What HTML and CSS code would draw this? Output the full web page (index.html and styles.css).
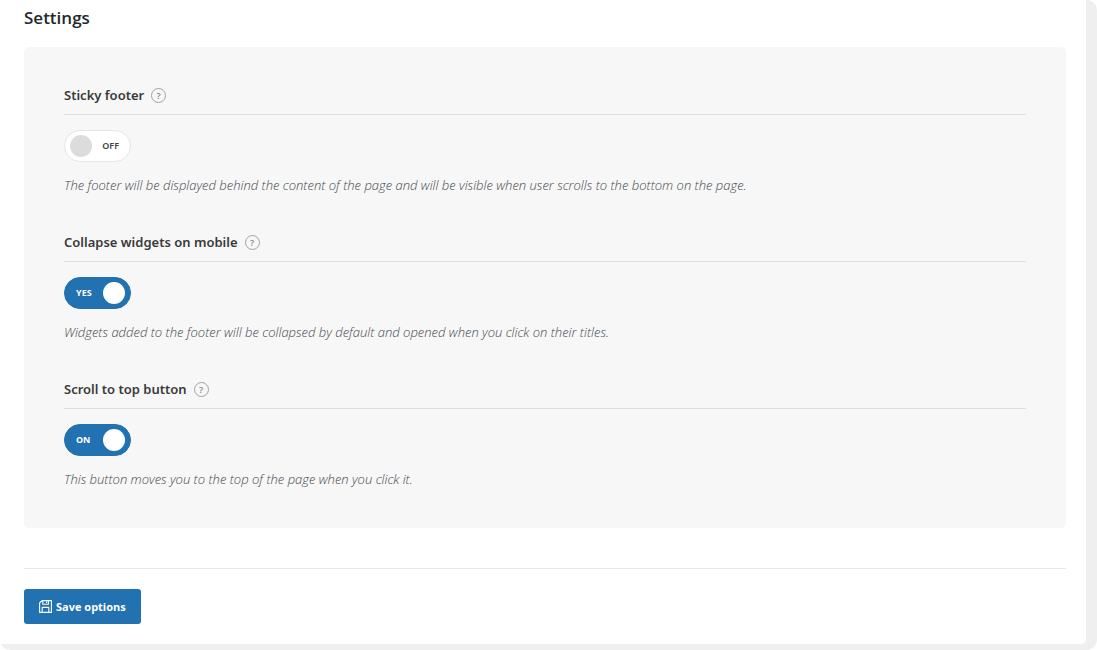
FILE: index.html
```html
<!DOCTYPE html>
<html lang="en">
<head>
<meta charset="utf-8">
<title>Settings</title>
<link rel="stylesheet" href="styles.css">
</head>
<body>
<div class="frame">
  <main class="page">
    <h1 class="page-title">Settings</h1>
    <form class="form">
      <div class="panel">
        <section class="option">
          <div class="option-head">
            <h2 class="option-title" id="sticky-title">Sticky footer</h2>
            <button class="help" type="button" aria-label="Help: sticky footer">?</button>
          </div>
          <label class="switch">
            <input class="switch-input" type="checkbox" aria-labelledby="sticky-title">
            <span class="switch-text">OFF</span>
          </label>
          <p class="description">The footer will be displayed behind the content of the page and will be visible when user scrolls to the bottom on the page.</p>
        </section>
        <section class="option">
          <div class="option-head">
            <h2 class="option-title" id="collapse-title">Collapse widgets on mobile</h2>
            <button class="help" type="button" aria-label="Help: collapse widgets on mobile">?</button>
          </div>
          <label class="switch switch-on">
            <input class="switch-input" type="checkbox" aria-labelledby="collapse-title" checked>
            <span class="switch-text">YES</span>
          </label>
          <p class="description">Widgets added to the footer will be collapsed by default and opened when you click on their titles.</p>
        </section>
        <section class="option">
          <div class="option-head">
            <h2 class="option-title" id="scroll-title">Scroll to top button</h2>
            <button class="help" type="button" aria-label="Help: scroll to top button">?</button>
          </div>
          <label class="switch switch-on">
            <input class="switch-input" type="checkbox" aria-labelledby="scroll-title" checked>
            <span class="switch-text">ON</span>
          </label>
          <p class="description">This button moves you to the top of the page when you click it.</p>
        </section>
      </div>
      <div class="actions">
        <button class="save" type="submit">
          <svg class="save-icon" viewBox="0 0 13 13" aria-hidden="true"><path d="M3 .6h9.4v11.8H.6V3zM3.8.6v3.6h5.6V.6M7.6 1.6v1.4M3.2 12.4V7.4h6.6v5"/></svg>
          Save options
        </button>
      </div>
    </form>
  </main>
</div>
</body>
</html>
```
FILE: styles.css
```css
* { box-sizing: border-box; }

body {
  margin: 0;
  background: #fff;
  color: #3c434a;
  font-family: "Segoe UI", "Noto Sans", "Open Sans", sans-serif;
  font-size: 13px;
}

h1, h2, p { margin: 0; }

.frame {
  min-height: 100vh;
  padding: 0 11px 6px 0;
  border-radius: 0 10px 10px 10px;
  background: #efefef;
  display: flex;
}

.page {
  flex: 1;
  padding: 6px 20px 20px 24px;
  border-radius: 0 0 5px 0;
  background: #fff;
}

.page-title {
  margin-bottom: 17px;
  color: #23282d;
  font-family: "Segoe UI", "Open Sans", sans-serif;
  font-size: 17px;
  font-weight: 600;
  line-height: 24px;
}

.panel {
  display: flex;
  flex-direction: column;
  gap: 40px;
  padding: 40px;
  border-radius: 5px;
  background: #f7f7f7;
}

.option-head {
  display: flex;
  align-items: flex-start;
  gap: 7px;
  height: 28px;
  margin-bottom: 15px;
  border-bottom: 1px solid #dedede;
}

.option-title {
  color: #3a3a3a;
  font-size: 13px;
  font-weight: 600;
  line-height: 17px;
}

.help {
  width: 15px;
  height: 15px;
  margin-top: 1px;
  padding: 0;
  border: 1px solid #a2a2a2;
  border-radius: 50%;
  background: none;
  color: #8c8c8c;
  font: 600 9px/13px "Noto Sans", sans-serif;
  text-align: center;
}

.switch {
  display: flex;
  align-items: center;
  justify-content: space-between;
  width: 67px;
  height: 32px;
  padding: 0 11px 0 5px;
  border: 1px solid #e6e6e6;
  border-radius: 16px;
  background: #fff;
  color: #3c434a;
  font-size: 9px;
  font-weight: 600;
  line-height: 12px;
}

.switch-input {
  appearance: none;
  width: 22px;
  height: 22px;
  margin: 0;
  border-radius: 50%;
  background: #dcdcde;
}

.switch-on {
  flex-direction: row-reverse;
  padding: 0 5px 0 11px;
  border-color: #2271b1;
  background: #2271b1;
  color: #fff;
  font-weight: 700;
}

.switch-on .switch-input { background: #fff; }

.description {
  margin-top: 14px;
  color: #44484d;
  font-family: "Segoe UI", "Open Sans", sans-serif;
  font-size: 13px;
  font-style: italic;
  font-weight: 300;
  line-height: 18px;
}

.actions {
  margin-top: 40px;
  padding-top: 20px;
  border-top: 1px solid #e8e8e8;
}

.save {
  display: flex;
  align-items: center;
  gap: 4px;
  height: 35px;
  padding: 0 15px;
  border: 0;
  border-radius: 3px;
  background: #2271b1;
  color: #fff;
  font: 700 11px/18px "Segoe UI", "Open Sans", sans-serif;
}

.save-icon {
  width: 13px;
  height: 13px;
  fill: none;
  stroke: currentColor;
  stroke-width: 1.1;
  stroke-linejoin: round;
}
```
